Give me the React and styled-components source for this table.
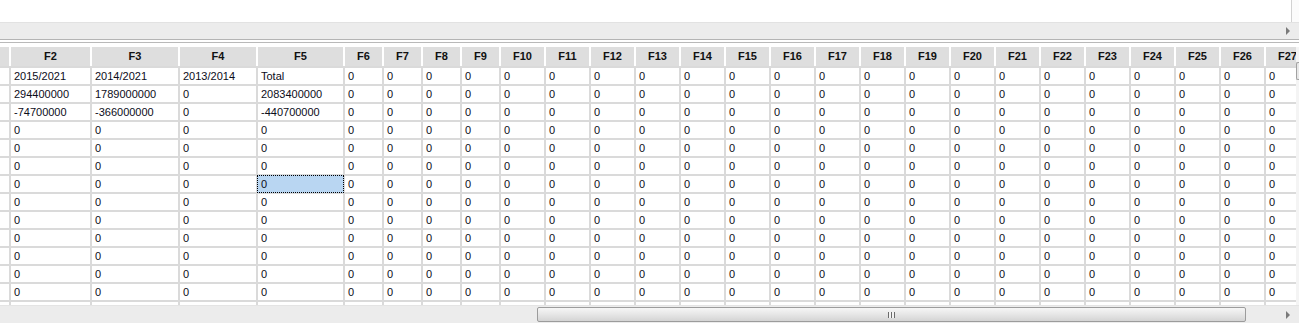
import React from 'react';
import styled, { createGlobalStyle } from 'styled-components';

const GlobalStyle = createGlobalStyle`
  html, body {
    margin: 0;
    padding: 0;
    background: #ffffff;
  }
  body {
    font-family: "Liberation Sans", Arial, sans-serif;
  }
`;

const COLS = '9px 79px 86px 76px 85px repeat(4, 37px) repeat(18, 43px)';

const Frame = styled.div`
  width: 1299px;
  height: 323px;
  overflow: hidden;
  display: flex;
  flex-direction: column;
  background: #ffffff;
`;

const TopPane = styled.div`
  height: 22px;
  display: flex;
`;

const TopBody = styled.div`
  flex: 1;
  background: #ffffff;
`;

const TopSide = styled.div`
  width: 7px;
  border-left: 1px solid #d2d2d2;
  background: #fbfbfb;
`;

const TopScroll = styled.div`
  height: 17px;
  background: #ececec;
  border-top: 1px solid #e2e2e2;
  box-sizing: border-box;
  display: flex;
  align-items: center;
  justify-content: flex-end;
  padding-right: 9px;
`;

const Arrow = styled.span`
  width: 0;
  height: 0;
  border-top: 4px solid transparent;
  border-bottom: 4px solid transparent;
  border-left: 4px solid #7a7a7a;
`;

const Splitter = styled.div`
  height: 8px;
  box-sizing: border-box;
  border-top: 1px solid #b4b4b4;
  background: #ffffff;
  padding-top: 2px;

  &::before {
    content: '';
    display: block;
    height: 1px;
    background: #b9b9b9;
  }
`;

const GridArea = styled.div`
  height: 258px;
  display: flex;
  overflow: hidden;
`;

const Table = styled.div`
  flex: 1;
  overflow: hidden;
  display: flex;
  flex-direction: column;
`;

const HeaderRow = styled.div`
  display: grid;
  grid-template-columns: ${COLS};
  column-gap: 2px;
  background: #ffffff;
  height: 19px;
  flex: none;
`;

const HeadCell = styled.div`
  background: #dedede;
  font-weight: bold;
  font-size: 11px;
  color: #111111;
  text-align: center;
  line-height: 19px;
  white-space: nowrap;
  overflow: hidden;
`;

const Body = styled.div`
  display: grid;
  grid-template-columns: ${COLS};
  grid-auto-rows: 16px;
  gap: 2px;
  padding-top: 2px;
  background: #dadada;
  flex: none;
`;

const Cell = styled.div`
  background: ${p => (p.$selected ? '#b9d6f2' : '#ffffff')};
  font-size: 11px;
  color: #0c0c1a;
  line-height: 16px;
  padding-left: 3px;
  white-space: nowrap;
  overflow: hidden;
  ${p =>
    p.$selected &&
    `
    margin: -1px;
    border: 1px dotted #000;
  `}
`;

const VScroll = styled.div`
  width: 3px;
  background: #f4f4f4;
  padding-top: 15px;
`;

const VThumb = styled.div`
  height: 16px;
  border: 1px solid #a2a2a2;
  border-right: none;
  border-radius: 2px 0 0 2px;
  background: #e8e8e8;
`;

const BottomBar = styled.div`
  height: 18px;
  background: #ececec;
  border-top: 1px solid #e4e4e4;
  box-sizing: border-box;
  display: flex;
  align-items: flex-start;
  padding-top: 1px;
`;

const TrackSpace = styled.div`
  flex: 0 0 537px;
`;

const Thumb = styled.div`
  flex: 0 0 709px;
  height: 15px;
  box-sizing: border-box;
  border: 1px solid #9c9c9c;
  border-radius: 2px;
  background: linear-gradient(#f6f6f6, #e6e6e6 50%, #d4d4d4);
  display: flex;
  justify-content: center;
  align-items: center;
`;

const Grip = styled.div`
  width: 7px;
  height: 6px;
  background: repeating-linear-gradient(
    90deg,
    #6b6b6b 0 1px,
    #f3f3f3 1px 3px
  );
`;

const ArrowSlot = styled.div`
  flex: 1;
  height: 15px;
  display: flex;
  align-items: center;
  justify-content: flex-end;
  padding-right: 9px;
`;

const headers = [''].concat(Array.from({ length: 26 }, (_, i) => `F${i + 2}`));

const firstRows = [
  ['', '2015/2021', '2014/2021', '2013/2014', 'Total'],
  ['', '294400000', '1789000000', '0', '2083400000'],
  ['', '-74700000', '-366000000', '0', '-440700000'],
];

// 13 full rows plus a sliver of the next one at the bottom edge
const rows = Array.from({ length: 14 }, (_, r) =>
  headers.map((_, c) => {
    if (c === 0 || r === 13) return '';
    if (r < 3 && c < 5) return firstRows[r][c];
    return '0';
  })
);

export default function App() {
  return (
    <>
      <GlobalStyle />
      <Frame>
        <TopPane>
          <TopBody />
          <TopSide />
        </TopPane>
        <TopScroll>
          <Arrow />
        </TopScroll>
        <Splitter />
        <GridArea>
          <Table>
            <HeaderRow>
              {headers.map((h, i) => (
                <HeadCell key={i}>{h}</HeadCell>
              ))}
            </HeaderRow>
            <Body>
              {rows.map((row, r) =>
                row.map((v, c) => (
                  <Cell key={`${r}-${c}`} $selected={r === 6 && c === 4}>
                    {v}
                  </Cell>
                ))
              )}
            </Body>
          </Table>
          <VScroll>
            <VThumb />
          </VScroll>
        </GridArea>
        <BottomBar>
          <TrackSpace />
          <Thumb>
            <Grip />
          </Thumb>
          <ArrowSlot>
            <Arrow />
          </ArrowSlot>
        </BottomBar>
      </Frame>
    </>
  );
}
